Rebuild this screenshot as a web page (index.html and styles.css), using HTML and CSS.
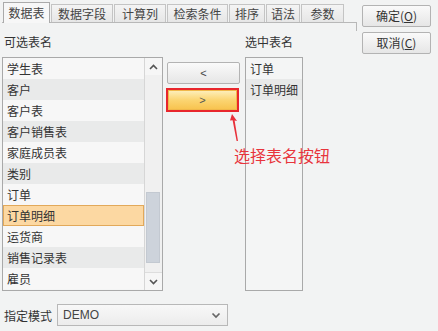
FILE: index.html
```html
<!DOCTYPE html>
<html lang="zh">
<head>
<meta charset="utf-8">
<link rel="stylesheet" href="styles.css">
</head>
<body>
<div class="win">
  <div class="left">
    <div class="tabs">
      <div class="tab active w1">数据表</div>
      <div class="tab w2">数据字段</div>
      <div class="tab w3">计算列</div>
      <div class="tab w4">检索条件</div>
      <div class="tab w5">排序</div>
      <div class="tab w6">语法</div>
      <div class="tab w7">参数</div>
    </div>
    <div class="panel">
      <div class="labels">
        <span class="lab-left">可选表名</span>
        <span class="lab-right">选中表名</span>
      </div>
      <div class="lists">
        <div class="list src">
          <div class="rows">
            <div class="row">学生表</div>
            <div class="row alt">客户</div>
            <div class="row">客户表</div>
            <div class="row alt">客户销售表</div>
            <div class="row">家庭成员表</div>
            <div class="row alt">类别</div>
            <div class="row">订单</div>
            <div class="row sel">订单明细</div>
            <div class="row">运货商</div>
            <div class="row alt">销售记录表</div>
            <div class="row">雇员</div>
          </div>
          <div class="sbar">
            <div class="sbtn"><svg width="9" height="6" viewBox="0 0 9 6"><path d="M1 5 L4.5 1.5 L8 5" fill="none" stroke="#555" stroke-width="1.6"/></svg></div>
            <div class="thumb"></div>
            <div class="sbtn down"><svg width="9" height="6" viewBox="0 0 9 6"><path d="M1 1 L4.5 4.5 L8 1" fill="none" stroke="#555" stroke-width="1.6"/></svg></div>
          </div>
        </div>
        <div class="mid">
          <div class="btn mv">&lt;</div>
          <div class="hl"><div class="btn mv gold">&gt;</div></div>
        </div>
        <div class="list dst">
          <div class="row">订单</div>
          <div class="row alt">订单明细</div>
        </div>
      </div>
      <div class="bottom">
        <span class="mlabel">指定模式</span>
        <div class="select">
          <span class="val">DEMO</span>
          <svg width="10" height="7" viewBox="0 0 10 7"><path d="M1.5 1.5 L5 5 L8.5 1.5" fill="none" stroke="#666" stroke-width="1.7"/></svg>
        </div>
      </div>
      <div class="note">
        <svg class="arrow" width="14" height="28" viewBox="0 0 14 28"><path d="M3 0 L8 7 L5.6 6.6 L9 27 L7.6 27 L3.6 6.3 L1 6.5 Z" fill="#e8303a"/></svg>
        <span class="ntext">选择表名按钮</span>
      </div>
    </div>
  </div>
  <div class="side">
    <div class="btn act">确定(<u>O</u>)</div>
    <div class="btn act">取消(<u>C</u>)</div>
  </div>
</div>
</body>
</html>
```
FILE: styles.css
```css
html, body {
  margin: 0;
  padding: 0;
  background: #f2f3f3;
  width: 438px;
  height: 331px;
  overflow: hidden;
  font-family: "Noto Sans CJK SC", "Noto Sans", sans-serif;
  font-size: 12px;
  color: #333;
}
.win {
  display: flex;
  padding-top: 2px;
}
.left {
  width: 355px;
  margin-left: 2px;
}
.tabs {
  display: flex;
  align-items: flex-end;
  height: 20px;
  border-bottom: 1px solid #b8b8b8;
  padding-left: 1px;
}
.tab {
  box-sizing: border-box;
  height: 18px;
  border: 1px solid #c4c4c4;
  border-bottom: none;
  background: linear-gradient(#f4f4f4, #e6e6e6);
  text-align: center;
  line-height: 17px;
  color: #444;
  margin-right: 1px;
}
.tab.active {
  height: 21px;
  margin-bottom: -1px;
  background: #f7f7f7;
  border-color: #aaa;
  line-height: 20px;
}
.w1 { width: 47px; }
.w2 { width: 62px; }
.w3 { width: 52px; }
.w4 { width: 61px; }
.w5 { width: 36px; }
.w6 { width: 34px; }
.w7 { width: 43px; }
.panel {
  position: relative;
}
.panel::before {
  content: "";
  position: absolute;
  right: 0;
  top: 0;
  width: 1px;
  height: 8px;
  background: #b8b8b8;
}
.labels {
  display: flex;
  height: 34px;
  box-sizing: border-box;
  padding-top: 12px;
  line-height: 14px;
  color: #333;
}
.lab-left { margin-left: 2px; width: 241px; }
.lists {
  display: flex;
  height: 234px;
}
.list {
  box-sizing: border-box;
  height: 234px;
  border: 1px solid #a9a9a9;
  background: #f4f5f5;
}
.src {
  width: 161px;
  display: flex;
}
.rows {
  flex: 1;
}
.row {
  box-sizing: border-box;
  height: 21px;
  line-height: 21px;
  padding-left: 4px;
  background: #f7f7f7;
  color: #333;
}
.row.alt {
  background: #e9eaea;
}
.row.sel {
  background: #fcd8a2;
  border: 1px solid #e2a95a;
  line-height: 19px;
  padding-left: 3px;
}
.sbar {
  width: 17px;
  border-left: 1px solid #d6d6d6;
  background: #f0f0f0;
  display: flex;
  flex-direction: column;
}
.sbtn {
  height: 17px;
  display: flex;
  align-items: center;
  justify-content: center;
  background: #f6f6f6;
}
.sbtn.down {
  margin-top: auto;
  border-top: 1px solid #ddd;
}
.thumb {
  margin: 117px 2px 0 1px;
  height: 71px;
  background: #cdd3db;
  border: 1px solid #c3c9d1;
  box-sizing: border-box;
}
.mid {
  width: 82px;
  box-sizing: border-box;
  padding: 5px 0 0 4px;
}
.btn {
  box-sizing: border-box;
  border: 1px solid #b3b3b3;
  border-radius: 2px;
  background: linear-gradient(#fafafa, #e6e6e6);
  text-align: center;
  color: #444;
}
.mv {
  width: 73px;
  height: 22px;
  line-height: 20px;
  font-family: "Liberation Sans", sans-serif;
  font-size: 11px;
}
.hl {
  margin-top: 4px;
  width: 73px;
  height: 24px;
  box-sizing: border-box;
  border: 2px solid #e8262c;
  margin-left: -1px;
}
.gold {
  width: 69px;
  height: 20px;
  line-height: 18px;
  border: 1px solid #f0b84a;
  border-radius: 0;
  background: linear-gradient(#fdeeb8, #fbd572 50%, #f8c450);
  color: #555;
}
.dst {
  width: 58px;
}
.dst .row {
  background: #f4f5f5;
}
.dst .row.alt {
  background: #e8e9e9;
}
.bottom {
  display: flex;
  align-items: center;
  margin-top: 13px;
  height: 22px;
}
.mlabel {
  margin-left: 2px;
  width: 53px;
}
.select {
  box-sizing: border-box;
  width: 171px;
  height: 22px;
  border: 1px solid #b8b8b8;
  background: linear-gradient(#f8f8f8, #ececec);
  display: flex;
  align-items: center;
  justify-content: space-between;
  padding: 0 6px 0 5px;
}
.val {
  font-family: "Liberation Sans", sans-serif;
  font-size: 12px;
  color: #444;
}
.note {
  position: absolute;
  left: 227px;
  top: 91px;
}
.arrow {
  position: absolute;
  left: 0;
  top: 0;
}
.ntext {
  position: absolute;
  left: 5px;
  top: 31px;
  white-space: nowrap;
  font-size: 16px;
  line-height: 20px;
  color: #e8343c;
}
.side {
  display: flex;
  flex-direction: column;
  gap: 5px;
  margin-left: 5px;
  margin-top: 3px;
}
.act {
  width: 69px;
  height: 22px;
  line-height: 20px;
  color: #333;
}
.act u {
  text-decoration: underline;
}
```
